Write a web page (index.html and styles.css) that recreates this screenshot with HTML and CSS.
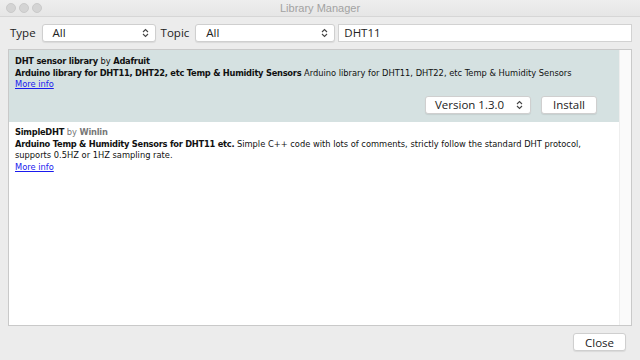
FILE: index.html
```html
<!DOCTYPE html>
<html lang="en">
  <head>
    <meta charset="UTF-8" />
    <title>Library Manager</title>
    <link rel="stylesheet" href="styles.css">
  </head>
  <body>
    <div class="window">
      <div class="titlebar">
        <div class="lights">
          <span class="light"></span>
          <span class="light"></span>
          <span class="light"></span>
        </div>
        <div class="title">Library Manager</div>
      </div>

      <div class="toolbar">
        <label class="label">Type</label>
        <div class="select select-type">
          <span>All</span>
          <svg class="arrows" width="7" height="10" viewBox="0 0 7 10"><path d="M1 4 L3.5 1.5 L6 4 M1 6 L3.5 8.5 L6 6" fill="none" stroke="#444" stroke-width="1.1"/></svg>
        </div>
        <label class="label">Topic</label>
        <div class="select select-topic">
          <span>All</span>
          <svg class="arrows" width="7" height="10" viewBox="0 0 7 10"><path d="M1 4 L3.5 1.5 L6 4 M1 6 L3.5 8.5 L6 6" fill="none" stroke="#444" stroke-width="1.1"/></svg>
        </div>
        <div class="search">DHT11</div>
      </div>

      <div class="list">
        <div class="items">
          <div class="item selected">
            <div class="line"><b>DHT sensor library</b> by <b>Adafruit</b></div>
            <div class="line"><b>Arduino library for DHT11, DHT22, etc Temp &amp; Humidity Sensors</b> Arduino library for DHT11, DHT22, etc Temp &amp; Humidity Sensors</div>
            <div class="line"><a href="#">More info</a></div>
            <div class="actions">
              <div class="select select-version">
                <span>Version 1.3.0</span>
                <svg class="arrows" width="7" height="10" viewBox="0 0 7 10"><path d="M1 4 L3.5 1.5 L6 4 M1 6 L3.5 8.5 L6 6" fill="none" stroke="#444" stroke-width="1.1"/></svg>
              </div>
              <button class="btn btn-install">Install</button>
            </div>
          </div>

          <div class="item">
            <div class="line"><b>SimpleDHT</b> <span class="muted">by</span> <b class="muted">Winlin</b></div>
            <div class="line"><b>Arduino Temp &amp; Humidity Sensors for DHT11 etc.</b> Simple C++ code with lots of comments, strictly follow the standard DHT protocol, supports 0.5HZ or 1HZ sampling rate.</div>
            <div class="line"><a href="#">More info</a></div>
          </div>
        </div>
        <div class="scrollbar"></div>
      </div>

      <div class="footer">
        <button class="btn btn-close">Close</button>
      </div>
    </div>
  </body>
</html>
```

FILE: styles.css
```css
* {
  margin: 0;
  padding: 0;
  box-sizing: border-box;
}

body {
  width: 640px;
  height: 360px;
  background: #ececec;
  font-family: 'DejaVu Sans', Verdana, sans-serif;
  overflow: hidden;
}

.window {
  height: 360px;
  display: flex;
  flex-direction: column;
}

/* Barra de titulo */
.titlebar {
  height: 17px;
  display: flex;
  align-items: center;
  position: relative;
  background: linear-gradient(#eeeeee, #e6e6e6);
  border-bottom: 1px solid #d6d6d6;
}

.lights {
  display: flex;
  gap: 3px;
  padding-left: 6px;
}

.light {
  width: 10px;
  height: 10px;
  border-radius: 50%;
  background: #d4d4d4;
  border: 1px solid #cacaca;
}

.title {
  flex: 1;
  text-align: center;
  font-family: 'Liberation Sans', Arial, sans-serif;
  font-size: 11px;
  color: #a2a2a2;
  margin-right: 42px;
}

/* Filtros */
.toolbar {
  height: 29px;
  display: flex;
  align-items: center;
  padding: 2px 8px 0 10px;
  font-family: 'Open Sans', 'DejaVu Sans', sans-serif;
  font-size: 11.5px;
  color: #222;
}

.label {
  margin-right: 6px;
}

.select {
  height: 18px;
  display: flex;
  align-items: center;
  justify-content: space-between;
  background: #fff;
  border: 1px solid #cfcfcf;
  border-radius: 3px;
  box-shadow: 0 1px 1px rgba(0, 0, 0, 0.08);
  padding: 0 6px 0 10px;
}

.select-type {
  width: 114px;
  margin-right: 5px;
}

.select-topic {
  width: 140px;
  margin-right: 3px;
}

.search {
  flex: 1;
  height: 18px;
  background: #fff;
  border: 1px solid #d2d2d2;
  padding: 0 5px;
  display: flex;
  align-items: center;
}

/* Lista de bibliotecas */
.list {
  flex: 1;
  margin: 3px 8px 0 8px;
  border: 1px solid #c9c9c9;
  background: #fff;
  display: flex;
}

.items {
  flex: 1;
}

.scrollbar {
  width: 12px;
  background: #fafafa;
  border-left: 1px solid #eeeeee;
}

.item {
  padding: 5px 6px 0 6px;
  font-size: 8.3px;
  line-height: 11.6px;
  color: #111;
}

.item b {
  letter-spacing: -0.25px;
}

.item.selected {
  background: #d5e1e1;
  height: 72px;
  padding-top: 6px;
}

.muted {
  color: #777;
}

.item a {
  color: #1a1aee;
}

.actions {
  display: flex;
  justify-content: flex-end;
  gap: 10px;
  margin-top: 5px;
  padding-right: 16px;
}

.select-version {
  width: 106px;
  font-family: 'Open Sans', 'DejaVu Sans', sans-serif;
  font-size: 11.5px;
  color: #222;
  padding: 0 7px 0 9px;
}

.btn {
  height: 18px;
  background: #fff;
  border: 1px solid #cfcfcf;
  border-radius: 3px;
  box-shadow: 0 1px 1px rgba(0, 0, 0, 0.08);
  font-family: 'Open Sans', 'DejaVu Sans', sans-serif;
  font-size: 11.5px;
  color: #222;
}

.btn-install {
  width: 56px;
}

/* Rodape */
.footer {
  height: 34px;
  display: flex;
  justify-content: flex-end;
  align-items: center;
  padding-right: 14px;
  padding-bottom: 2px;
}

.btn-close {
  width: 53px;
}
```
